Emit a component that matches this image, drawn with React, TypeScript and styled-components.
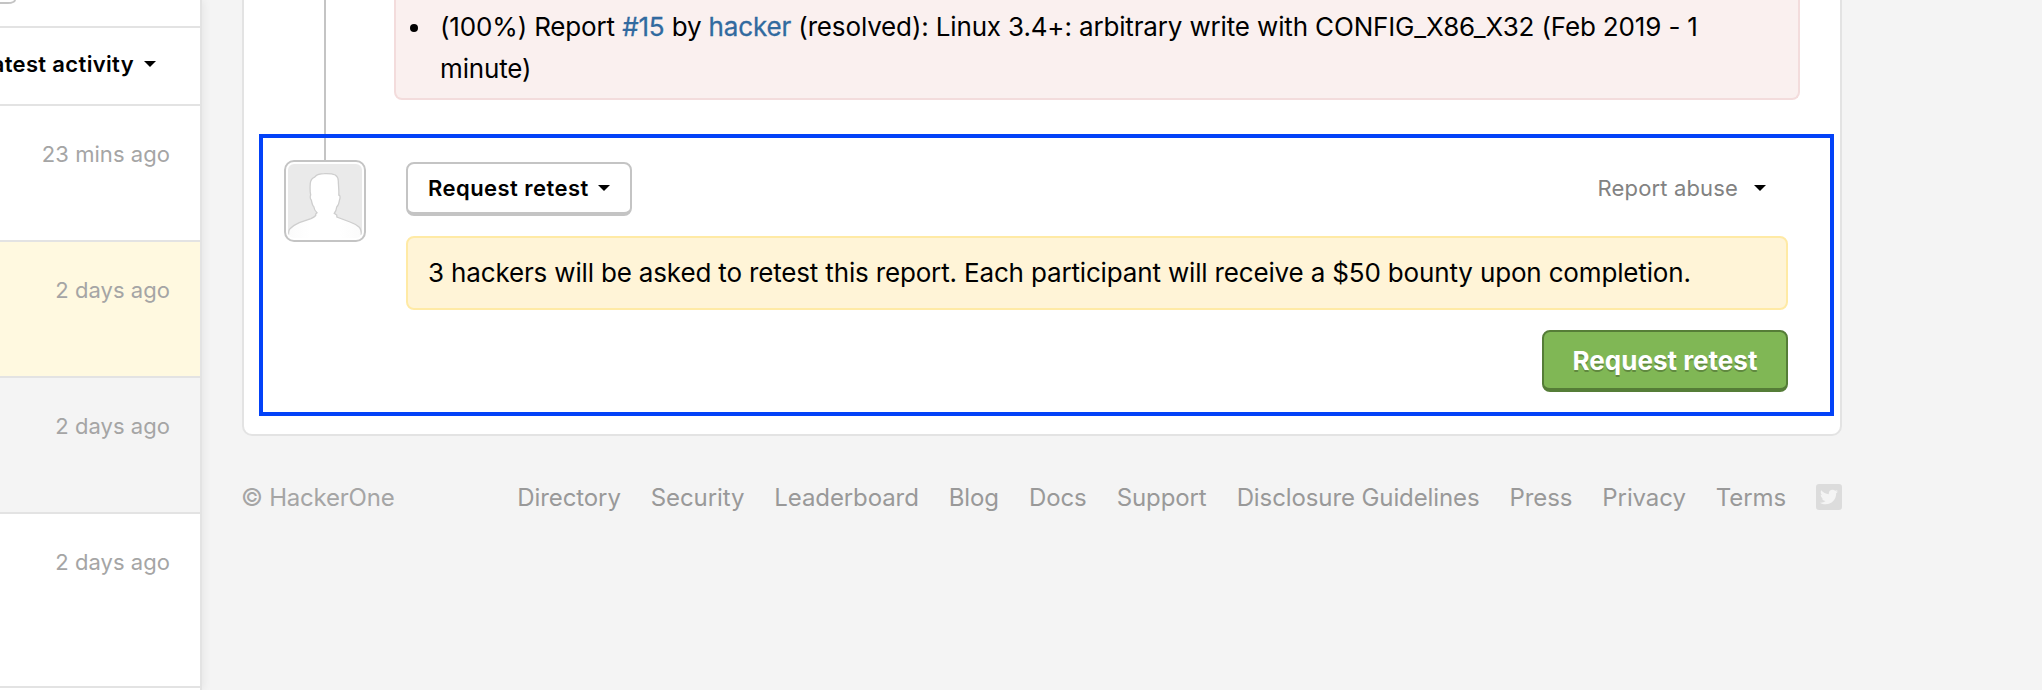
import React from "react";
import styled, { createGlobalStyle } from "styled-components";
import { FaTwitter } from "react-icons/fa";

const GlobalStyle = createGlobalStyle`
  *, *::before, *::after { box-sizing: border-box; }
  body {
    margin: 0;
    background: #f4f4f4;
    color: #000;
    font-family: Inter, "Liberation Sans", sans-serif;
    overflow: hidden;
  }
`;

const Page = styled.div`
  display: flex;
  height: 690px;
  overflow: hidden;
`;

const Sidebar = styled.aside`
  flex: none;
  width: 202px;
  height: 690px;
  overflow: visible;
  background: #fff;
  border-right: 2px solid #e3e3e3;
  box-shadow: 2px 0 8px rgba(0, 0, 0, 0.06);
`;

const FilterBar = styled.div`
  height: 28px;
  border-bottom: 2px solid #e3e3e3;
`;

const FilterField = styled.div`
  width: 16px;
  height: 4px;
  border: solid #c4c4c4;
  border-width: 0 2px 2px 0;
  border-bottom-right-radius: 8px 4px;
`;

const SortBar = styled.div`
  display: flex;
  align-items: center;
  justify-content: flex-end;
  gap: 10px;
  height: 78px;
  padding: 0 44px 4px 0;
  overflow: hidden;
  border-bottom: 2px solid #e3e3e3;
  font-size: 22px;
  font-weight: 600;
  letter-spacing: 0.35px;
  white-space: nowrap;
`;

const Caret = styled.span`
  flex: none;
  border: 6px solid transparent;
  border-top-color: #000;
  border-bottom: 0;
`;

const ReportRow = styled.div<{ $bg: string; $height?: number }>`
  height: ${(p) => p.$height ?? 136}px;
  padding: 33px 30px 0 0;
  background: ${(p) => p.$bg};
  border-bottom: 2px solid #e3e3e3;
  color: #a5a5a5;
  font-size: 22px;
  letter-spacing: 0.05px;
  line-height: 30px;
  text-align: right;
  white-space: nowrap;
`;

const Main = styled.main`
  width: 1600px;
  margin-left: 40px;
`;

const Card = styled.section`
  height: 436px;
  background: #fff;
  border: 2px solid #e3e3e3;
  border-top: 0;
  border-radius: 0 0 10px 10px;
`;

const TimelineEntry = styled.div`
  display: flex;
  height: 134px;
  padding-left: 80px;
`;

const TimelineLine = styled.span`
  flex: none;
  width: 2px;
  background: #c4c4c4;
`;

const Duplicates = styled.div`
  width: 1406px;
  height: 100px;
  margin-left: 68px;
  padding: 6px 44px 0 44px;
  background: #faf0ef;
  border: 2px solid #f3dcdc;
  border-top: 0;
  border-radius: 0 0 8px 8px;
`;

const DuplicateList = styled.ul`
  margin: 0;
  padding: 0;
  list-style: none;
  font-size: 26px;
  line-height: 42px;
`;

const DuplicateItem = styled.li`
  display: flex;
  margin-left: -30px;
`;

const Bullet = styled.span`
  flex: none;
  width: 8px;
  height: 8px;
  margin: 18px 22px 0 0;
  border-radius: 50%;
  background: #000;
`;

const DuplicateText = styled.span`
  letter-spacing: -0.15px;
`;

const Link = styled.a`
  color: #316a9f;
  -webkit-text-stroke: 0.3px #316a9f;
`;

const ActionPanel = styled.div`
  display: flex;
  height: 282px;
  margin: 0 6px 0 15px;
  padding-left: 21px;
  border: 4px solid #0342f8;
`;

const AvatarColumn = styled.div`
  display: flex;
  flex: none;
  flex-direction: column;
  align-items: center;
  width: 82px;
`;

const AvatarStem = styled(TimelineLine)`
  height: 22px;
`;

const AvatarFrame = styled.div`
  width: 82px;
  height: 82px;
  padding: 2px;
  background: #fff;
  border: 2px solid #c4c4c4;
  border-radius: 10px;

  svg {
    display: block;
    border-radius: 6px;
  }
`;

const Actions = styled.div`
  display: flex;
  flex-direction: column;
  width: 1382px;
  margin-left: 40px;
  padding-top: 24px;
`;

const ActionBar = styled.div`
  display: flex;
  justify-content: space-between;
  height: 54px;
`;

const SelectButton = styled.button`
  display: flex;
  align-items: center;
  gap: 9px;
  width: 226px;
  height: 54px;
  padding: 0 0 0 20px;
  background: #fff;
  border: 2px solid #c4c4c4;
  border-bottom-width: 4px;
  border-radius: 8px;
  color: #000;
  font: 600 22px/30px Inter, sans-serif;
  letter-spacing: 0.45px;
  white-space: nowrap;
`;

const AbuseMenu = styled.div`
  display: flex;
  align-items: center;
  gap: 16px;
  height: 52px;
  padding-right: 22px;
  color: #828282;
  font-size: 22px;
  letter-spacing: 0.15px;
`;

const Notice = styled.p`
  height: 74px;
  margin: 20px 0;
  padding: 0 20px;
  background: #fff4d7;
  border: 2px solid #ffeaa5;
  border-radius: 8px;
  font-size: 26px;
  letter-spacing: -0.16px;
  line-height: 70px;
  white-space: nowrap;
`;

const SubmitButton = styled.button`
  align-self: flex-end;
  width: 246px;
  height: 62px;
  padding: 2px 0 0;
  background: #80b755;
  border: 2px solid #557d37;
  border-bottom-width: 4px;
  border-radius: 8px;
  color: #fff;
  font: 700 26px/54px Inter, sans-serif;
  text-shadow: 0 2px 0 rgba(0, 0, 0, 0.25);
  white-space: nowrap;
`;

const Footer = styled.footer`
  display: flex;
  align-items: center;
  justify-content: space-between;
  margin-top: 45px;
  height: 32px;
  color: #a5a5a5;
  font-size: 24px;
  letter-spacing: -0.22px;
  line-height: 32px;
  white-space: nowrap;
`;

const FooterText = styled.span`
  margin-left: -1px;
  padding-top: 2px;
`;

const FooterNav = styled.nav`
  display: flex;
  align-items: center;
  gap: 30px;
  color: #999;
  letter-spacing: -0.1px;
`;

const FooterLink = styled.a`
  padding-top: 2px;
`;

const TwitterBadge = styled.a`
  display: flex;
  align-items: center;
  justify-content: center;
  width: 26px;
  height: 26px;
  background: #dcdcdc;
  border-radius: 3px;
  color: #f4f4f4;
`;

const rows = [
  { when: "23 mins ago", bg: "#fff" },
  { when: "2 days ago", bg: "#fff9e0" },
  { when: "2 days ago", bg: "#f4f4f4" },
  { when: "2 days ago", bg: "#fff", height: 174 },
];

const footerLinks = [
  "Directory",
  "Security",
  "Leaderboard",
  "Blog",
  "Docs",
  "Support",
  "Disclosure Guidelines",
  "Press",
  "Privacy",
  "Terms",
];

const silhouette =
  "M.5 71C.5 68 .6 66 2 64.7C4.500 62 8 60.200 11.300 58.700L23 54.700C25 53.700 26.500 52.800 27.700 51.500L27.700 50L29 48.700C27.500 47.500 26.300 46 25.700 42.500C24.500 42 23.800 38.500 23.300 36C22 35 22 32 22.700 31C22 28 22 23 22.300 19.300C22.500 16 24 14 27 12.800C29 10.500 33 9.700 36.300 9.700C41 9.500 45 10 47.300 11C49.500 12.500 50.300 14.500 50.300 17C50.300 21 51.200 27 50.800 31C52.300 31 52.300 34 51.500 36C51 40 49.800 42 48.700 43C48.400 46 47.500 48 46.300 49.300L48.700 51L48.900 53L62 58C66 59.500 69 61 71.300 63.300C73 65 73.300 68 73.300 71";

const Avatar = () => (
  <AvatarFrame>
    <svg width="74" height="74" viewBox="0 0 74 74">
      <defs>
        <linearGradient id="body" x1="0" y1="0" x2="1" y2="0">
          <stop offset="0" stopColor="#fbfbfb" />
          <stop offset="0.3" stopColor="#fff" />
          <stop offset="0.7" stopColor="#fff" />
          <stop offset="1" stopColor="#fbfbfb" />
        </linearGradient>
      </defs>
      <rect width="74" height="71" fill="#eaeaea" />
      <path d={silhouette + "V74H.5Z"} fill="url(#body)" />
      <path d={silhouette} fill="none" stroke="#cecece" strokeWidth="1.3" />
    </svg>
  </AvatarFrame>
);

export default function App() {
  return (
    <>
      <GlobalStyle />
      <Page>
        <Sidebar>
          <FilterBar>
            <FilterField />
          </FilterBar>
          <SortBar>
            Latest activity <Caret />
          </SortBar>
          {rows.map((row, i) => (
            <ReportRow key={i} $bg={row.bg} $height={row.height}>
              {row.when}
            </ReportRow>
          ))}
        </Sidebar>
        <Main>
          <Card>
            <TimelineEntry>
              <TimelineLine />
              <Duplicates>
                <DuplicateList>
                  <DuplicateItem>
                    <Bullet />
                    <DuplicateText>
                      (100%) Report <Link>#15</Link> by <Link>hacker</Link> (resolved): Linux 3.4+: arbitrary
                      write with CONFIG_X86_X32 (Feb 2019 - 1 minute)
                    </DuplicateText>
                  </DuplicateItem>
                </DuplicateList>
              </Duplicates>
            </TimelineEntry>
            <ActionPanel>
              <AvatarColumn>
                <AvatarStem />
                <Avatar />
              </AvatarColumn>
              <Actions>
                <ActionBar>
                  <SelectButton>
                    Request retest <Caret />
                  </SelectButton>
                  <AbuseMenu>
                    Report abuse <Caret />
                  </AbuseMenu>
                </ActionBar>
                <Notice>
                  3 hackers will be asked to retest this report. Each participant will receive a $50 bounty upon
                  completion.
                </Notice>
                <SubmitButton>Request retest</SubmitButton>
              </Actions>
            </ActionPanel>
          </Card>
          <Footer>
            <FooterText>© HackerOne</FooterText>
            <FooterNav>
              {footerLinks.map((label) => (
                <FooterLink key={label}>{label}</FooterLink>
              ))}
              <TwitterBadge aria-label="Twitter">
                <FaTwitter size={18} />
              </TwitterBadge>
            </FooterNav>
          </Footer>
        </Main>
      </Page>
    </>
  );
}
